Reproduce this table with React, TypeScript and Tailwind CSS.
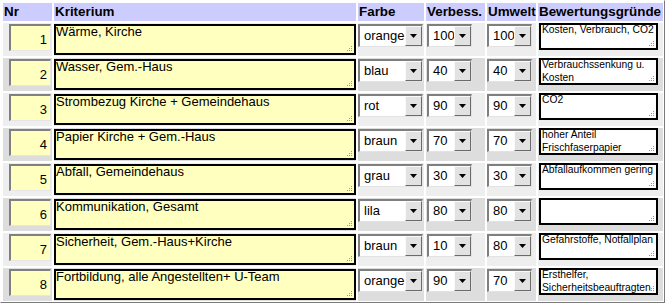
import React from "react";

type Row = { nr: number; krit: string; farbe: string; v: string; u: string; grund: string };

const rows: Row[] = [
  { nr: 1, krit: "Wärme, Kirche", farbe: "orange", v: "100", u: "100", grund: "Kosten, Verbrauch, CO2" },
  { nr: 2, krit: "Wasser, Gem.-Haus", farbe: "blau", v: "40", u: "40", grund: "Verbrauchssenkung u. Kosten" },
  { nr: 3, krit: "Strombezug Kirche + Gemeindehaus", farbe: "rot", v: "90", u: "90", grund: "CO2" },
  { nr: 4, krit: "Papier Kirche + Gem.-Haus", farbe: "braun", v: "70", u: "70", grund: "hoher Anteil Frischfaserpapier" },
  { nr: 5, krit: "Abfall, Gemeindehaus", farbe: "grau", v: "30", u: "30", grund: "Abfallaufkommen gering" },
  { nr: 6, krit: "Kommunikation, Gesamt", farbe: "lila", v: "80", u: "80", grund: "" },
  { nr: 7, krit: "Sicherheit, Gem.-Haus+Kirche", farbe: "braun", v: "10", u: "80", grund: "Gefahrstoffe, Notfallplan" },
  { nr: 8, krit: "Fortbildung, alle Angestellten+ U-Team", farbe: "orange", v: "90", u: "70", grund: "Ersthelfer, Sicherheitsbeauftragten" },
];

function Grip() {
  return (
    <svg className="absolute right-[1px] bottom-[1px]" width="7" height="7" viewBox="0 0 7 7">
      <rect x="5" y="1" width="1" height="1" fill="#9a9a9a" />
      <rect x="3" y="3" width="1" height="1" fill="#9a9a9a" />
      <rect x="5" y="3" width="1" height="1" fill="#9a9a9a" />
      <rect x="1" y="5" width="1" height="1" fill="#9a9a9a" />
      <rect x="3" y="5" width="1" height="1" fill="#9a9a9a" />
      <rect x="5" y="5" width="1" height="1" fill="#9a9a9a" />
    </svg>
  );
}

function Sel({ value, w }: { value: string; w: string }) {
  return (
    <div
      className={`${w} h-[23px] flex bg-white border-t-2 border-l-2 border-t-[#7f7f7f] border-l-[#7f7f7f] border-r border-b border-r-[#e3e3e3] border-b-[#e3e3e3]`}
    >
      <div className="flex-1 min-w-0 pl-[4px] text-[13px] leading-[20px] text-black whitespace-nowrap">
        {value}
      </div>
      <div className="relative z-10 w-[17px] h-[20px] shrink-0 flex items-center justify-center bg-[#e2e2e2] border border-t-[#fafafa] border-l-[#fafafa] border-r-[#6a6a6a] border-b-[#6a6a6a]">
        <svg width="7" height="4" viewBox="0 0 7 4">
          <path d="M0 0H7L3.5 4Z" fill="#000" />
        </svg>
      </div>
    </div>
  );
}

export default function App() {
  return (
    <div className="bg-white w-[667px] h-[304px]" style={{ fontFamily: '"Liberation Sans", Arial, sans-serif' }}>
      <div className="w-[665px] border border-t-white border-l-white border-r-[#7a7a7a] border-b-[#7a7a7a] pt-[2px] pl-[2px] pr-[1px] pb-[1px]">
        <div className="grid grid-cols-[49px_302px_66px_59px_49px_125px] gap-[2px]">
          {["Nr", "Kriterium", "Farbe", "Verbess.", "Umwelt", "Bewertungsgründe"].map((h) => (
            <div
              key={h}
              className="h-[18px] bg-[#ccccff] pl-[1px] text-[13.4px] font-bold leading-[18px] text-black whitespace-nowrap overflow-hidden"
            >
              {h}
            </div>
          ))}
          {rows.map((r) => {
            const bg = r.nr % 2 === 1 ? "bg-[#eeeeee]" : "bg-[#dddddd]";
            return (
              <React.Fragment key={r.nr}>
                <div className={`${bg} h-[33px] pt-[1px] pl-[6px]`}>
                  <div className="w-[42px] h-[27px] bg-[#ffffc0] border-t-2 border-l-2 border-t-[#808080] border-l-[#808080] border-r border-b border-r-[#e6e6e6] border-b-[#e6e6e6] text-right pr-[3px] text-[13px] leading-[27px] text-black">
                    {r.nr}
                  </div>
                </div>
                <div className={`${bg} h-[33px] pt-[1px]`}>
                  <div className="relative w-full h-[31px] bg-[#ffffc0] border-2 border-black overflow-hidden">
                    <div className="text-[13px] leading-[14px] text-black -mt-[1px] whitespace-nowrap">{r.krit}</div>
                    <Grip />
                  </div>
                </div>
                <div className={`${bg} h-[33px] pt-[1px]`}>
                  <Sel value={r.farbe} w="w-[65px]" />
                </div>
                <div className={`${bg} h-[33px] pt-[1px] pl-[1px]`}>
                  <Sel value={r.v} w="w-[45px]" />
                </div>
                <div className={`${bg} h-[33px] pt-[1px]`}>
                  <Sel value={r.u} w="w-[45px]" />
                </div>
                <div className={`${bg} h-[33px] pt-[0px] pl-[1px]`}>
                  <div className="relative w-[119px] h-[27px] bg-white border-2 border-black overflow-hidden">
                    <div className="text-[10.3px] leading-[13px] text-black -mt-[2px] pl-[1px] break-words">{r.grund}</div>
                    <Grip />
                  </div>
                </div>
              </React.Fragment>
            );
          })}
        </div>
      </div>
    </div>
  );
}
